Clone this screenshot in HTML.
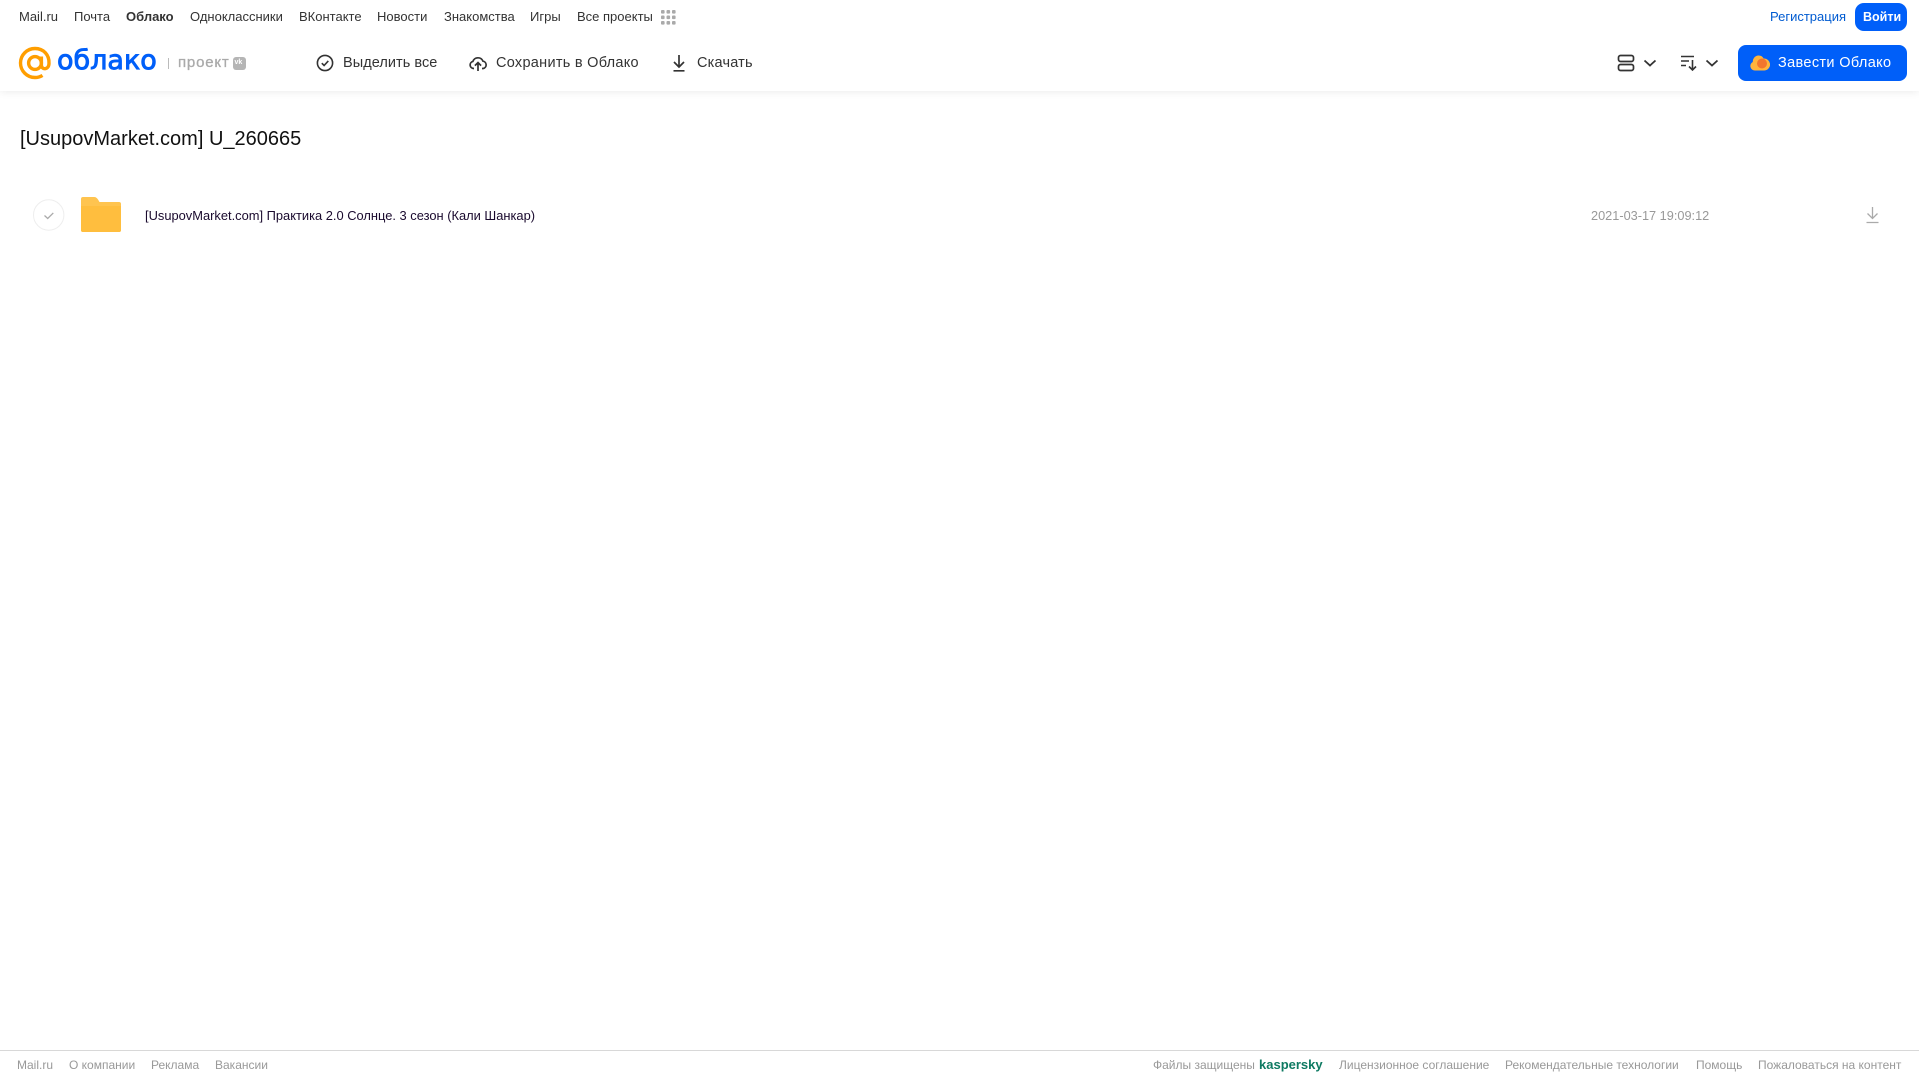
<!DOCTYPE html>
<html lang="ru"><head><meta charset="utf-8"><title>Облако</title>
<style>
html,body{margin:0;padding:0;background:#fff;width:1919px;height:1079px;overflow:hidden}
body{font-family:"Liberation Sans",Arial,sans-serif;position:relative}
.t{position:absolute;white-space:nowrap;line-height:16px}
.n{font-size:13px;top:9px;color:#333}
.a{font-size:14.5px;top:55px;color:#333;letter-spacing:.28px}
.f{font-size:12px;top:1057px;color:#999}
svg{position:absolute;display:block}
</style></head><body>
<div style="position:absolute;left:0;top:0;width:1919px;height:91px;background:#fff;box-shadow:0 1px 8px rgba(0,0,0,.08)"></div>

<span class="t n" style="left:19px">Mail.ru</span>
<span class="t n" style="left:74px">Почта</span>
<span class="t n" style="left:126px;font-weight:bold">Облако</span>
<span class="t n" style="left:190px">Одноклассники</span>
<span class="t n" style="left:299px">ВКонтакте</span>
<span class="t n" style="left:377px">Новости</span>
<span class="t n" style="left:444px">Знакомства</span>
<span class="t n" style="left:530px">Игры</span>
<span class="t n" style="left:577px">Все проекты</span>
<svg style="left:661px;top:10px" width="15" height="15" fill="#aaa"><rect x="0" y="0" width="3.6" height="3.6" rx="1"/><rect x="5.5" y="0" width="3.6" height="3.6" rx="1"/><rect x="11" y="0" width="3.6" height="3.6" rx="1"/><rect x="0" y="5.5" width="3.6" height="3.6" rx="1"/><rect x="5.5" y="5.5" width="3.6" height="3.6" rx="1"/><rect x="11" y="5.5" width="3.6" height="3.6" rx="1"/><rect x="0" y="11" width="3.6" height="3.6" rx="1"/><rect x="5.5" y="11" width="3.6" height="3.6" rx="1"/><rect x="11" y="11" width="3.6" height="3.6" rx="1"/></svg>

<span class="t n" style="left:1770px;color:#005bd1">Регистрация</span>
<div style="position:absolute;left:1855px;top:3px;width:52px;height:28px;border-radius:9px;background:#005ff9"></div>
<span class="t n" style="left:1863px;color:#fff;font-size:12.5px;font-weight:bold">Войти</span>

<svg style="left:18px;top:46px" width="34" height="34" viewBox="0 0 34 34" fill="none" stroke="#ff9e00" stroke-width="3.4"><circle cx="17" cy="17" r="6.4"/><path d="M23.400 10.500v8.500c0 5.200 7.300 5.200 7.600-1.500C31.500 9 25.600 2.500 17 2.500 9 2.500 2.500 9 2.500 17S9 31.500 17 31.500c3 0 5.400-.8 7.500-2.100"/></svg>
<span class="t" style="left:57px;top:43px;font-family:'DejaVu Sans',sans-serif;font-size:27px;line-height:36px;color:#005ff9;-webkit-text-stroke:.9px #005ff9">облако</span>
<div style="position:absolute;left:168px;top:58px;width:1px;height:11px;background:#bbb"></div>
<span class="t" style="left:178px;top:55px;font-size:15px;color:#aaa;letter-spacing:.8px;-webkit-text-stroke:.3px #aaa">проект</span>
<div style="position:absolute;left:233px;top:57px;width:13px;height:13px;border-radius:3px;background:#b5b5b5"></div>
<span class="t" style="left:234.500px;top:55px;font-size:7px;color:#fff;font-weight:bold">vk</span>

<svg style="left:316px;top:54px" width="18" height="18" fill="none" stroke="#333" stroke-width="1.6"><circle cx="9" cy="9" r="7.600"/><path d="M5.800 9.200l2.300 2.300 4.200-4.600"/></svg>
<span class="t a" style="left:343px;letter-spacing:.05px">Выделить все</span>
<svg style="left:469px;top:54px" width="18" height="18" fill="none" stroke="#333" stroke-width="1.7"><path d="M5 14.500H4.600A3.600 3.600 0 0 1 3.900 7.400 5.400 5.400 0 0 1 14 7.200a3.700 3.700 0 0 1 .1 7.300H13"/><path d="M9 17V9M5.900 11.600L9 8.600l3.100 3"/></svg>
<span class="t a" style="left:496px">Сохранить в Облако</span>
<svg style="left:670px;top:54px" width="18" height="18" fill="none" stroke="#333" stroke-width="1.7"><path d="M9 1v11.500M4 8l5 5 5-5M3.500 16.800h11"/></svg>
<span class="t a" style="left:697px;letter-spacing:.2px">Скачать</span>

<svg style="left:1617px;top:54px" width="18" height="18" fill="none" stroke="#333" stroke-width="1.7"><rect x="1.500" y="1.500" width="15" height="6" rx="2"/><rect x="1.500" y="10.500" width="15" height="6" rx="2"/></svg>
<svg style="left:1643px;top:58px" width="14" height="10" fill="none" stroke="#333" stroke-width="1.8"><path d="M1.500 2.500L7 7.500l5.500-5"/></svg>
<svg style="left:1680px;top:54px" width="18" height="18" fill="none" stroke="#333" stroke-width="1.4"><path d="M1 2.500h13M1 7h8M1 11.500h5"/><path stroke-width="1.6" d="M12.500 6v10M9 12.500l3.500 3.500 3.500-3.500"/></svg>
<svg style="left:1705px;top:58px" width="14" height="10" fill="none" stroke="#333" stroke-width="1.8"><path d="M1.500 2.500L7 7.500l5.500-5"/></svg>

<div style="position:absolute;left:1738px;top:45px;width:169px;height:36px;border-radius:8px;background:#005ff9"></div>
<svg style="left:1750px;top:54px" width="20" height="18"><path fill="#ffb43c" d="M5 16.500A4.500 4.500 0 0 1 2.800 8 6 6 0 0 1 8 1.500 5.500 5.500 0 0 1 13.600 4.500 6 6 0 0 1 14.500 16.500z"/><circle cx="12" cy="9.500" r="5" fill="#f2762e"/></svg>
<span class="t a" style="left:1778px;color:#fff;letter-spacing:.35px">Завести Облако</span>

<span class="t" style="left:20px;top:127px;font-size:20px;line-height:24px;color:#111">[UsupovMarket.com] U_260665</span>

<svg style="left:33px;top:199px" width="32" height="33" fill="none"><circle cx="15.700" cy="16" r="15.200" stroke="#eee"/><path d="M11.500 16.500l3.200 3 5.600-5.600" stroke="#aaa" stroke-width="1.3"/></svg>
<svg style="left:81px;top:197px" width="40" height="36"><path fill="#ffc44f" d="M2 0h11c2 0 3 1 4 2.500L18.500 5H38a2 2 0 0 1 2 2v26a2 2 0 0 1-2 2H2a2 2 0 0 1-2-2V2a2 2 0 0 1 2-2z"/><path fill="#ffbe3e" d="M0 9h40v24a2 2 0 0 1-2 2H2a2 2 0 0 1-2-2z"/></svg>
<span class="t" style="left:145px;top:207.500px;font-size:12.880px;color:#1a0a2e">[UsupovMarket.com] Практика 2.0 Солнце. 3 сезон (Кали Шанкар)</span>
<span class="t" style="left:1591px;top:207.500px;font-size:12.740px;color:#999">2021-03-17 19:09:12</span>
<svg style="left:1864px;top:206px" width="17" height="18" fill="none" stroke="#aaa" stroke-width="1.3"><path d="M8.500 1v11M3.500 7.500l5 5 5-5M2.500 16.500h12"/></svg>

<div style="position:absolute;left:0;top:1050px;width:1919px;height:1px;background:#d8d8d8"></div>
<span class="t f" style="left:17px">Mail.ru</span>
<span class="t f" style="left:69px">О компании</span>
<span class="t f" style="left:151px">Реклама</span>
<span class="t f" style="left:215px">Вакансии</span>
<span class="t f" style="left:1153px">Файлы защищены</span>
<span class="t f" style="left:1259px;font-size:13px;font-weight:bold;color:#0e7a62">kaspersky</span>
<span class="t f" style="left:1339px">Лицензионное соглашение</span>
<span class="t f" style="left:1505px">Рекомендательные технологии</span>
<span class="t f" style="left:1696px">Помощь</span>
<span class="t f" style="left:1758px">Пожаловаться на контент</span>
</body></html>
